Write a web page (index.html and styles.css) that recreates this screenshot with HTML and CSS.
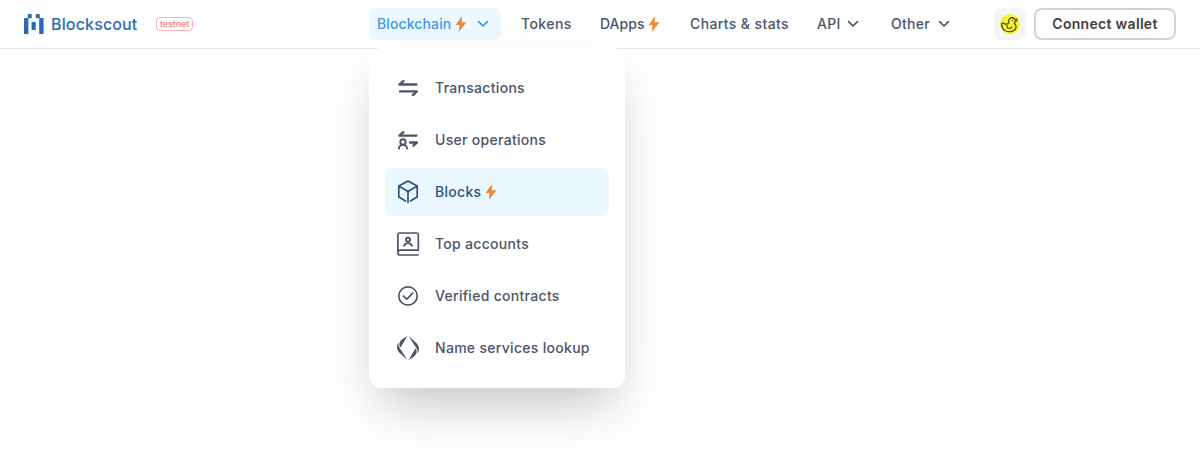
FILE: index.html
```
<!DOCTYPE html>
<html lang="en">
<head>
<meta charset="utf-8">
<title>Blockscout</title>
<link rel="stylesheet" href="styles.css">
</head>
<body>
<svg class="defs" aria-hidden="true">
  <symbol id="bolt" viewBox="0 0 12 16"><path d="M7.1 0 .6 9h4L3.8 16 11.4 6.3H6.6z" fill="#ed8936"/></symbol>
  <symbol id="chevron" viewBox="0 0 12 8"><path d="M1.6 1.7 6 6l4.4-4.3" fill="none" stroke="currentColor" stroke-width="1.7" stroke-linecap="round" stroke-linejoin="round"/></symbol>
</svg>
<header class="topbar">
  <a class="brand">
    <svg class="brand-mark" viewBox="0 0 20 20" fill="#2b6cb0"><rect x="3.8" y="0" width="4" height="4.2" rx=".7"/><rect x="11.8" y="0" width="4" height="4.2" rx=".7"/><rect x="0" y="3.9" width="4.4" height="16.1" rx=".6"/><rect x="7.6" y="8" width="4.2" height="8" rx=".6"/><rect x="15.2" y="3.9" width="4.4" height="16.1" rx=".6"/></svg>
    <span class="brand-name">Blockscout</span>
  </a>
  <span class="network">testnet</span>
  <nav class="nav">
    <div class="nav-group">
      <a class="nav-item wide active">Blockchain<svg class="bolt"><use href="#bolt"/></svg><svg class="chevron"><use href="#chevron"/></svg></a>
      <div class="menu">
        <a class="menu-item"><svg class="icon" viewBox="0 0 30 30"><path d="M23.4 11.5H6.4l4-3.4M7.1 18.4h16.7l-3.9 3.6" class="line thick"/></svg>Transactions</a>
        <a class="menu-item"><svg class="icon" viewBox="0 0 30 30"><path d="M23.4 10.6h-17l4-3.4M17.1 17.5h6.8l-3.5 3.1" class="line thick"/><circle cx="10" cy="17" r="2.7" class="line mid"/><path d="M5.9 23.6c.3-2.4 1.9-3.7 4.1-3.7s3.8 1.3 4.1 3.7" class="line mid"/></svg>User operations</a>
        <a class="menu-item selected"><svg class="icon" viewBox="0 0 30 30"><path d="m12.6 23.9-6.8-4V8.9L15 3.9l9.2 5v11l-6.8 4M5.8 8.9l9.2 5.5 9.2-5.5M15 14.4v10.8" class="line thin"/><path d="M15 3.9v10.5M5.8 19.9l9.2-5.5 9.2 5.5" class="line faint"/></svg>Blocks<svg class="bolt"><use href="#bolt"/></svg></a>
        <a class="menu-item"><svg class="icon" viewBox="0 0 30 30"><path d="M25 26H7.2c-1.7 0-2.3-.9-2.3-2.5V5.8c0-1.1.6-1.8 1.7-1.8h17.1c1 0 1.6.6 1.6 1.6v15.6H7.2c-1.4 0-2.2.8-2.2 2.3" class="line thin"/><circle cx="15" cy="10.7" r="2" class="line mid"/><path d="M11 16.7c.8-1.8 2.4-2.6 4-2.6s3.2.8 4 2.6" class="line mid"/></svg>Top accounts</a>
        <a class="menu-item"><svg class="icon" viewBox="0 0 30 30"><circle cx="15" cy="15" r="9.2" class="line thin"/><path d="m10.5 15 3.2 3.2 6-6" class="line thin"/></svg>Verified contracts</a>
        <a class="menu-item"><svg class="icon" viewBox="0 0 30 30" fill="currentColor"><path d="M14.3 3 7.6 14.4C6.3 13 5.9 11.4 6.6 9.4 7.6 6.8 11.2 4.9 14.3 3zM5.2 9.8C3.2 13.2 3.6 17.4 6.9 20.3L14.3 27 8.4 17.4C6.6 15 5.2 13.2 5.2 9.8zM15.7 27l6.7-11.4c1.3 1.4 1.7 3 1 5C22.4 23.2 18.8 25.1 15.7 27zM24.8 20.2c2-3.4 1.6-7.6-1.7-10.5L15.7 3l5.9 9.6c1.8 2.4 3.2 4.2 3.2 7.6z"/></svg>Name services lookup</a>
      </div>
    </div>
    <a class="nav-item tokens">Tokens</a>
    <a class="nav-item dapps">DApps<svg class="bolt"><use href="#bolt"/></svg></a>
    <a class="nav-item charts">Charts &amp; stats</a>
    <a class="nav-item api">API<svg class="chevron"><use href="#chevron"/></svg></a>
    <a class="nav-item other">Other<svg class="chevron"><use href="#chevron"/></svg></a>
  </nav>
  <div class="actions">
    <a class="duck"><svg class="duck-icon" viewBox="0 0 20 20"><circle cx="10" cy="10" r="10" fill="#f8f032"/><g fill="none" stroke="#393717" stroke-width="1.1" stroke-linecap="round" stroke-linejoin="round"><path d="M9 8.9C8.2 6 9.3 3.9 11.6 3.6c2.2-.2 3.8 1.1 3.8 3 0 1.1-.6 1.9-1.1 2.5 3.3 3 1.7 7.6-3.1 8.5C6.3 18.3 1.9 16.1 1.7 10.5c0-1.6.9-2.4 1.9-1.2.9 1.1 3.5 1.2 5.4-.4"/><path d="M7.2 11.4c-.3 1.5-.2 2.9 2 2.9 1.2 0 2-.4 2.5-1.2"/></g><circle cx="12.3" cy="6.3" r=".7" fill="#393717"/><path d="m15 5 2.4-.5v3L15 8z" fill="#a33a20"/></svg></a>
    <button class="wallet">Connect wallet</button>
  </div>
</header>
</body>
</html>
```
FILE: styles.css
```
* { box-sizing: border-box; }
body { margin: 0; height: 450px; overflow: hidden; background: #fff; color: #4a5568; font: 500 14px/20px Inter, sans-serif; letter-spacing: .3px; }
.defs { position: absolute; width: 0; height: 0; }
.topbar { display: flex; align-items: center; height: 49px; padding: 0 24px 1px; border-bottom: 1px solid #e8e9ea; }
.brand { display: flex; align-items: center; width: 132px; gap: 7px; color: #2b6cb0; }
.brand-mark { width: 20px; height: 20px; flex: none; }
.brand-name { font: 500 16px/20px Inter, sans-serif; letter-spacing: .15px; }
.network { width: 37px; height: 14px; border: 1px solid #feb2b2; border-radius: 4px; color: #fc8181; font: 500 9px/12px Inter, sans-serif; letter-spacing: -.1px; text-align: center; }
.nav { display: flex; gap: 12px; margin-left: 176px; }
.nav-group { position: relative; }
.nav-item { display: flex; align-items: center; height: 32px; padding: 0 8px; border-radius: 8px; white-space: nowrap; }
.active { background: #ebf8ff; color: #4299e1; }
.wide { width: 132px; letter-spacing: .12px; }
.tokens { width: 67px; letter-spacing: .42px; }
.dapps { width: 78px; letter-spacing: .02px; }
.charts { width: 115px; letter-spacing: .38px; }
.api { width: 62px; }
.other { width: 69px; }
.bolt { width: 12px; height: 16px; margin-left: 4px; flex: none; }
.chevron { width: 12px; height: 8px; margin-left: auto; margin-right: 4px; flex: none; }
.other .chevron { margin-left: 8px; margin-right: 0; }
.menu { position: absolute; top: 40px; left: 0; display: flex; flex-direction: column; gap: 4px; width: 256px; height: 340px; padding: 16px; border-radius: 12px; background: #fff; box-shadow: 0 25px 50px -12px rgba(0, 0, 0, .25); letter-spacing: .3px; }
.menu-item { display: flex; align-items: center; height: 48px; padding-left: 8px; border-radius: 8px; white-space: nowrap; }
.selected { background: #ebf8ff; color: #2c5282; }
.icon { width: 30px; height: 30px; margin-right: 12px; flex: none; }
.line { fill: none; stroke: currentColor; stroke-linecap: round; stroke-linejoin: round; }
.thick { stroke-width: 2.4; }
.mid { stroke-width: 1.9; }
.thin { stroke-width: 1.7; }
.faint { stroke-width: .7; stroke-dasharray: 2 2; opacity: .35; }
.actions { display: flex; gap: 8px; margin-left: auto; }
.duck { display: flex; align-items: center; justify-content: center; width: 32px; height: 32px; border-radius: 8px; background: #f5f5f5; }
.duck-icon { width: 20px; height: 20px; }
.wallet { width: 142px; height: 32px; padding: 0; border: 2px solid #cbd5e0; border-radius: 8px; background: #fff; color: #404040; font: 600 14px/20px Inter, sans-serif; letter-spacing: .3px; }
```
